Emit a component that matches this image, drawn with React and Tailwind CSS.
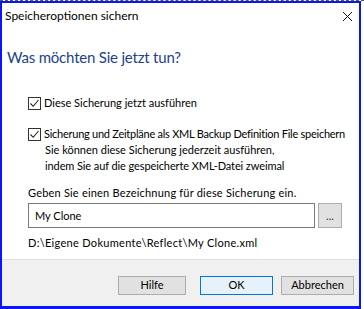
export default function App() {
  const font = { fontFamily: 'Lato, "Open Sans", sans-serif' };
  const Check = () => (
    <div className="w-[13px] h-[13px] border border-[#333] bg-white flex items-center justify-center shrink-0">
      <svg width="11" height="11" viewBox="0 0 11 11">
        <path d="M1.5 5.5 L4.2 8.3 L9.5 2" fill="none" stroke="#222" strokeWidth="1.1" />
      </svg>
    </div>
  );
  return (
    <div className="w-[364px] h-[309px] bg-white relative overflow-hidden" style={font}>
      <div className="h-px w-full border-t border-dashed border-[#555]" />
      <div className="w-[361px] h-[308px] border-2 border-b-[3px] border-[#0a16f5] flex flex-col bg-white">
        <div className="h-[26px] shrink-0 flex items-center justify-between pl-[3px] pr-[6px] text-[12px] text-black">
          <span>Speicheroptionen sichern</span>
          <svg width="11" height="11" viewBox="0 0 11 11">
            <path d="M1 1 L10 10 M10 1 L1 10" stroke="#111" strokeWidth="1" />
          </svg>
        </div>
        <div className="pl-[5px] mt-[18px] text-[15px] leading-[20px] tracking-[-0.2px] text-[#233f8c] whitespace-nowrap">Was möchten Sie jetzt tun?</div>
        <div className="pl-[26px] pr-[4px] text-[11px] text-black leading-[16px] whitespace-nowrap">
          <div className="flex items-center gap-[3px] mt-[28px]">
            <Check />
            <span>Diese Sicherung jetzt ausführen</span>
          </div>
          <div className="flex items-center gap-[3px] mt-[15px]">
            <Check />
            <span className="tracking-[-0.25px]">Sicherung und Zeitpläne als XML Backup Definition File speichern</span>
          </div>
          <div className="pl-[17px]">Sie können diese Sicherung jederzeit ausführen,</div>
          <div className="pl-[17px] tracking-[-0.1px]">indem Sie auf die gespeicherte XML-Datei zweimal</div>
          <div className="mt-[11px] tracking-[0.2px]">Geben Sie einen Bezeichnung für diese Sicherung ein.</div>
          <div className="flex gap-[3px] mt-[2px]">
            <div className="w-[287px] h-[25px] border border-[#7a7a7a] flex items-center pl-[6px]">My Clone</div>
            <div className="w-[24px] h-[25px] border border-[#adadad] bg-[#e1e1e1] flex items-center justify-center text-[#333]">...</div>
          </div>
          <div className="mt-[7px] tracking-[0.3px]">D:\Eigene Dokumente\Reflect\My Clone.xml</div>
        </div>
        <div className="mt-[8px] flex-1 bg-[#f0f0f0] border-t border-[#dfdfdf] flex items-start justify-end pr-[5px] pt-[16px] text-[11px] text-black">
          <div className="w-[68px] h-[19px] border border-[#adadad] bg-[#e1e1e1] flex items-center justify-center">Hilfe</div>
          <div className="ml-[14px] w-[73px] h-[19px] border border-[#0078d7] bg-[#e5f1fb] flex items-center justify-center">OK</div>
          <div className="ml-[8px] w-[73px] h-[19px] border border-[#adadad] bg-[#e1e1e1] flex items-center justify-center">Abbrechen</div>
        </div>
      </div>
    </div>
  );
}
